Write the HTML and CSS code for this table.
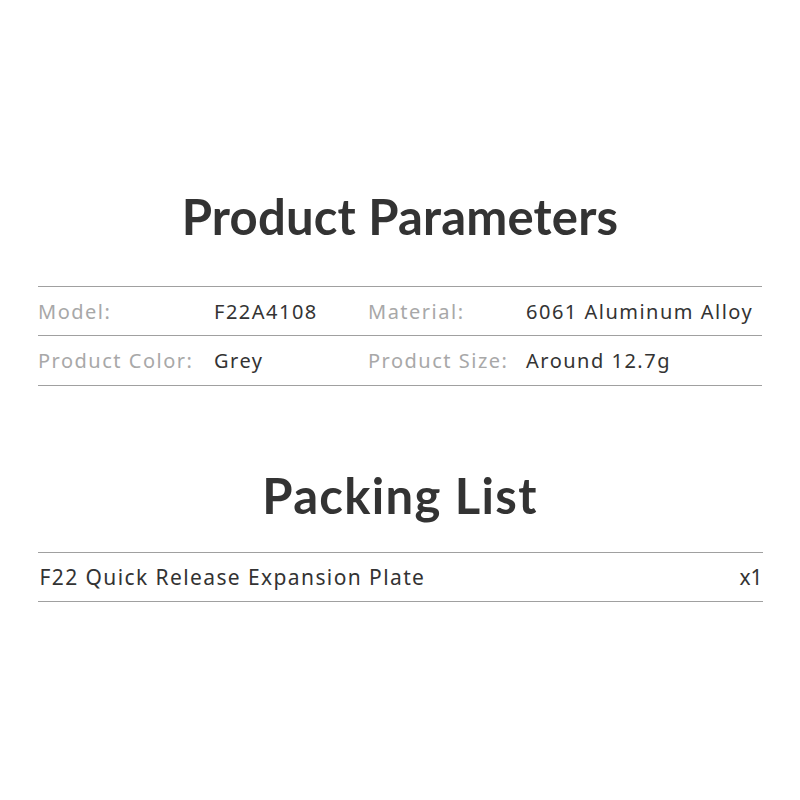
FILE: index.html
```html
<!DOCTYPE html>
<html>
<head>
<meta charset="utf-8">
<link rel="stylesheet" href="styles.css">
</head>
<body>
<main class="page">
  <h1 class="title title-params">Product Parameters</h1>
  <div class="params">
    <div class="row">
      <span class="label">Model:</span>
      <span class="value">F22A4108</span>
      <span class="label">Material:</span>
      <span class="value">6061 Aluminum Alloy</span>
    </div>
    <div class="row">
      <span class="label">Product Color:</span>
      <span class="value">Grey</span>
      <span class="label">Product Size:</span>
      <span class="value">Around 12.7g</span>
    </div>
  </div>
  <h1 class="title title-pack">Packing List</h1>
  <div class="pack">
    <div class="pack-row">
      <span class="item">F22 Quick Release Expansion Plate</span>
      <span class="qty">x1</span>
    </div>
  </div>
</main>
</body>
</html>
```
FILE: styles.css
```css
html, body {
  margin: 0;
  padding: 0;
  background: #ffffff;
}
body {
  font-family: "Noto Sans", "Open Sans", sans-serif;
  color: #333333;
}
.page {
  width: 800px;
  height: 800px;
  display: flex;
  flex-direction: column;
  align-items: center;
}
.title {
  margin: 0;
  font-family: Lato, "Noto Sans", sans-serif;
  font-size: 49px;
  font-weight: 700;
  line-height: 60px;
  color: #333333;
  text-align: center;
}
.title-params {
  margin-top: 186px;
  letter-spacing: 0.2px;
}
.title-pack {
  margin-top: 79px;
  letter-spacing: 1.3px;
}
.params {
  width: 724px;
  margin-top: 40px;
  border-top: 1px solid #a0a0a0;
}
.row {
  display: grid;
  grid-template-columns: 176px 154px 158px 1fr;
  height: 48px;
  align-items: center;
  border-bottom: 1px solid #a0a0a0;
  font-size: 20px;
  letter-spacing: 1.5px;
}
.row + .row {
  height: 49px;
}
.label {
  color: #a8a8a8;
}
.value {
  color: #333333;
}
.pack {
  width: 725px;
  margin-top: 27px;
  border-top: 1px solid #a0a0a0;
}
.pack-row {
  display: flex;
  justify-content: space-between;
  align-items: center;
  height: 48px;
  border-bottom: 1px solid #a0a0a0;
  font-size: 21px;
  letter-spacing: 1.4px;
  color: #333333;
  padding-left: 2px;
}
.qty {
  letter-spacing: 0;
}
```
